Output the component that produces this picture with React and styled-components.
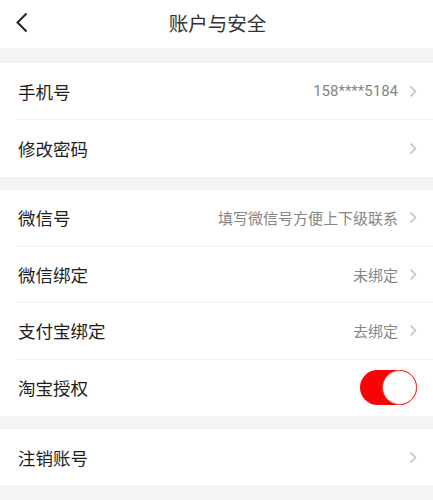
import React, { useState } from "react";
import styled, { createGlobalStyle } from "styled-components";

const GlobalStyle = createGlobalStyle`
  html, body {
    margin: 0;
    padding: 0;
    background: #f4f4f4;
    font-family: "Noto Sans CJK SC", "Noto Sans", Roboto, sans-serif;
  }
`;

const Page = styled.div`
  width: 433px;
  min-height: 500px;
  background: #f4f4f4;
`;

const Header = styled.div`
  height: 48px;
  background: #fff;
  display: flex;
  align-items: center;
  justify-content: center;
  position: relative;
  margin-bottom: 15px;
`;

const BackButton = styled.button`
  position: absolute;
  left: 10px;
  top: 10px;
  width: 24px;
  height: 24px;
  padding: 0;
  border: 0;
  background: none;
  display: flex;
  align-items: center;
  justify-content: center;
`;

const Title = styled.h1`
  margin: 0 0 3px 2px;
  font-size: 19.5px;
  font-weight: 400;
  color: #333;
`;

const Group = styled.div`
  background: #fff;
  margin-bottom: 13px;
`;

const Row = styled.div`
  height: ${(p) => p.h || 57}px;
  margin-left: 17px;
  padding-right: 16px;
  display: flex;
  align-items: center;
  box-sizing: border-box;
  border-bottom: ${(p) => (p.last ? "none" : "1px solid #f1f1f1")};
`;

const Label = styled.span`
  flex: 1;
  font-size: 17.5px;
  color: #1e1e1e;
  padding-left: 1px;
`;

const Value = styled.span`
  font-size: 15px;
  color: #858585;
  margin-right: 11px;
  font-family: Roboto, "Noto Sans CJK SC", sans-serif;
`;

const Track = styled.button`
  width: 57px;
  height: 35px;
  border-radius: 18px;
  border: 0;
  padding: 0;
  background: ${(p) => (p.on ? "#f50505" : "#e5e5e5")};
  display: flex;
  align-items: center;
  justify-content: ${(p) => (p.on ? "flex-end" : "flex-start")};
`;

const Knob = styled.span`
  width: 33px;
  height: 33px;
  border-radius: 50%;
  background: #fff;
  border: 1px solid #f33;
`;

const Chevron = () => (
  <svg width="8" height="13" viewBox="0 0 8 13">
    <path d="M1.5 1.5 L6.5 6.5 L1.5 11.5" fill="none" stroke="#c2c2c2" strokeWidth="1.6" />
  </svg>
);

const Item = ({ label, value, last, h, children }) => (
  <Row last={last} h={h}>
    <Label>{label}</Label>
    {children || (
      <>
        {value && <Value>{value}</Value>}
        <Chevron />
      </>
    )}
  </Row>
);

export default function App() {
  const [taobao, setTaobao] = useState(true);

  return (
    <Page>
      <GlobalStyle />
      <Header>
        <BackButton>
          <svg width="14" height="21" viewBox="0 0 14 21">
            <path d="M11.5 1.5 L2.5 10.5 L11.5 19.5" fill="none" stroke="#222" strokeWidth="2" />
          </svg>
        </BackButton>
        <Title>账户与安全</Title>
      </Header>

      <Group>
        <Item label="手机号" value="158****5184" />
        <Item label="修改密码" last />
      </Group>

      <Group>
        <Item label="微信号" value="填写微信号方便上下级联系" h={56.5} />
        <Item label="微信绑定" value="未绑定" h={56.5} />
        <Item label="支付宝绑定" value="去绑定" h={56.5} />
        <Item label="淘宝授权" last h={56.5}>
          <Track on={taobao} onClick={() => setTaobao(!taobao)}>
            <Knob />
          </Track>
        </Item>
      </Group>

      <Group>
        <Item label="注销账号" last h={56} />
      </Group>
    </Page>
  );
}
